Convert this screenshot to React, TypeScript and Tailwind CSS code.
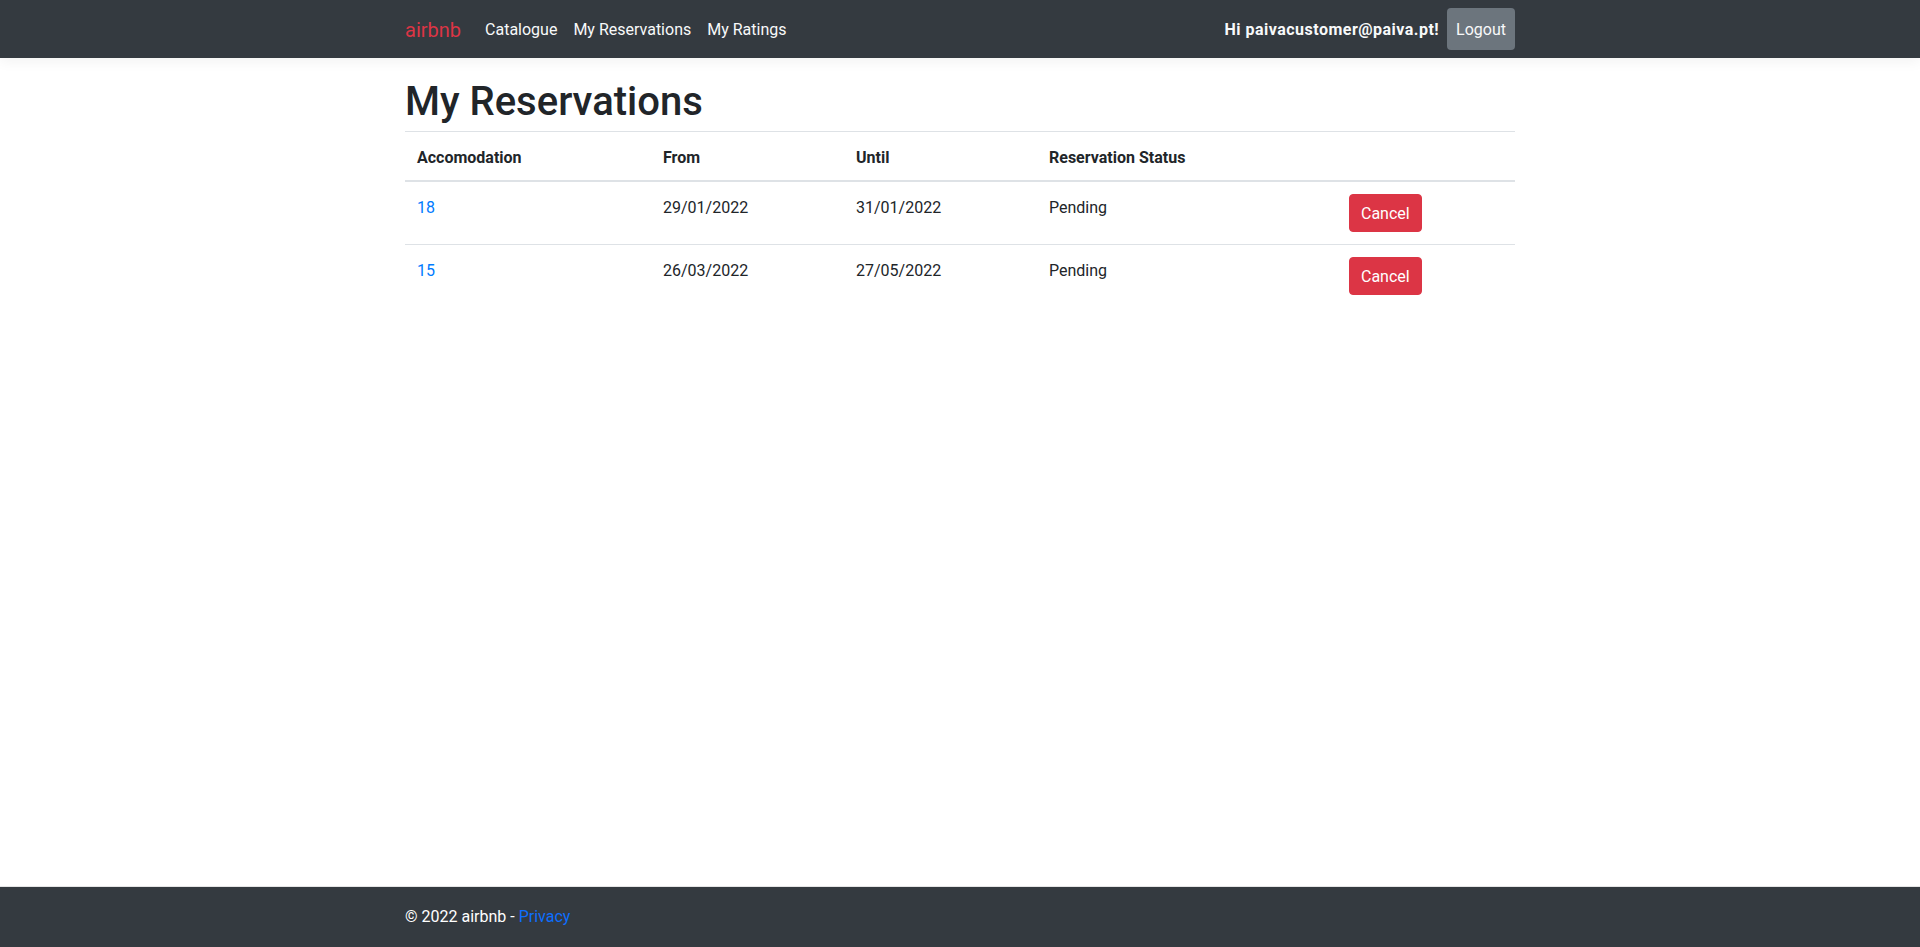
import React from 'react'

const reservations = [
  { id: 18, from: '29/01/2022', until: '31/01/2022', status: 'Pending' },
  { id: 15, from: '26/03/2022', until: '27/05/2022', status: 'Pending' },
]

const font = { fontFamily: '"Segoe UI", Roboto, "Liberation Sans", sans-serif' }

const Navbar = () => (
  <nav className="mb-4 bg-[#343a40] py-2 shadow-[0_4px_12px_rgba(0,0,0,0.05)]">
    <div className="mx-auto flex w-[1110px] items-center">
      <a className="mr-4 pt-[6px] pb-[4px] text-[20px] leading-[30px] text-[#dc3545]" href="#">
        airbnb
      </a>
      <ul className="flex items-center">
        <li><a className="block px-2 pt-[9px] pb-[7px] text-[#f8f9fa]" href="#">Catalogue</a></li>
        <li><a className="block px-2 pt-[9px] pb-[7px] text-[#f8f9fa]" href="#">My Reservations</a></li>
        <li><a className="block px-2 pt-[9px] pb-[7px] text-[#f8f9fa]" href="#">My Ratings</a></li>
      </ul>
      <div className="ml-auto flex items-center gap-2">
        <span className="pt-[2px] font-bold tracking-[0.03em] text-[#f8f9fa]">Hi paivacustomer@paiva.pt!</span>
        <button className="h-[42px] rounded bg-[#6c757d] px-[9px] pt-[2px] text-[#f8f9fa]">Logout</button>
      </div>
    </div>
  </nav>
)

const th = 'border-t border-b-2 border-[#dee2e6] px-3 pt-[14px] pb-[10px] align-bottom font-bold'
const td = 'border-t border-[#dee2e6] px-3 pt-[14px] pb-[10px] align-top'

const ReservationsTable = () => (
  <table className="w-full border-collapse text-left">
    <thead>
      <tr>
        <th className={`w-[246px] ${th}`}>Accomodation</th>
        <th className={`w-[193px] ${th}`}>From</th>
        <th className={`w-[193px] ${th}`}>Until</th>
        <th className={`w-[300px] ${th}`}>Reservation Status</th>
        <th className={th}></th>
      </tr>
    </thead>
    <tbody>
      {reservations.map((r) => (
        <tr key={r.id}>
          <td className={td}>
            <a className="text-[#007bff]" href="#">{r.id}</a>
          </td>
          <td className={td}>{r.from}</td>
          <td className={td}>{r.until}</td>
          <td className={td}>{r.status}</td>
          <td className="border-t border-[#dee2e6] p-3 align-top">
            <button className="rounded border border-[#dc3545] bg-[#dc3545] px-[11px] pt-[7px] pb-[5px] text-white">Cancel</button>
          </td>
        </tr>
      ))}
    </tbody>
  </table>
)

const App = () => {
  return (
    <div className="flex min-h-screen flex-col bg-white text-base text-[#212529]" style={font}>
      <Navbar />
      <main className="mx-auto w-[1110px] pb-3">
        <h1 className="mb-[5px] pt-[4px] text-[40px] font-medium leading-[1.2]">My Reservations</h1>
        <ReservationsTable />
      </main>
      <footer className="mt-auto border-t border-[#e5e5e5] bg-[#343a40] leading-[60px] text-white">
        <div className="mx-auto w-[1110px]">
          &copy; 2022 airbnb - <a className="text-[#0d6efd]" href="#">Privacy</a>
        </div>
      </footer>
    </div>
  )
}

export default App
